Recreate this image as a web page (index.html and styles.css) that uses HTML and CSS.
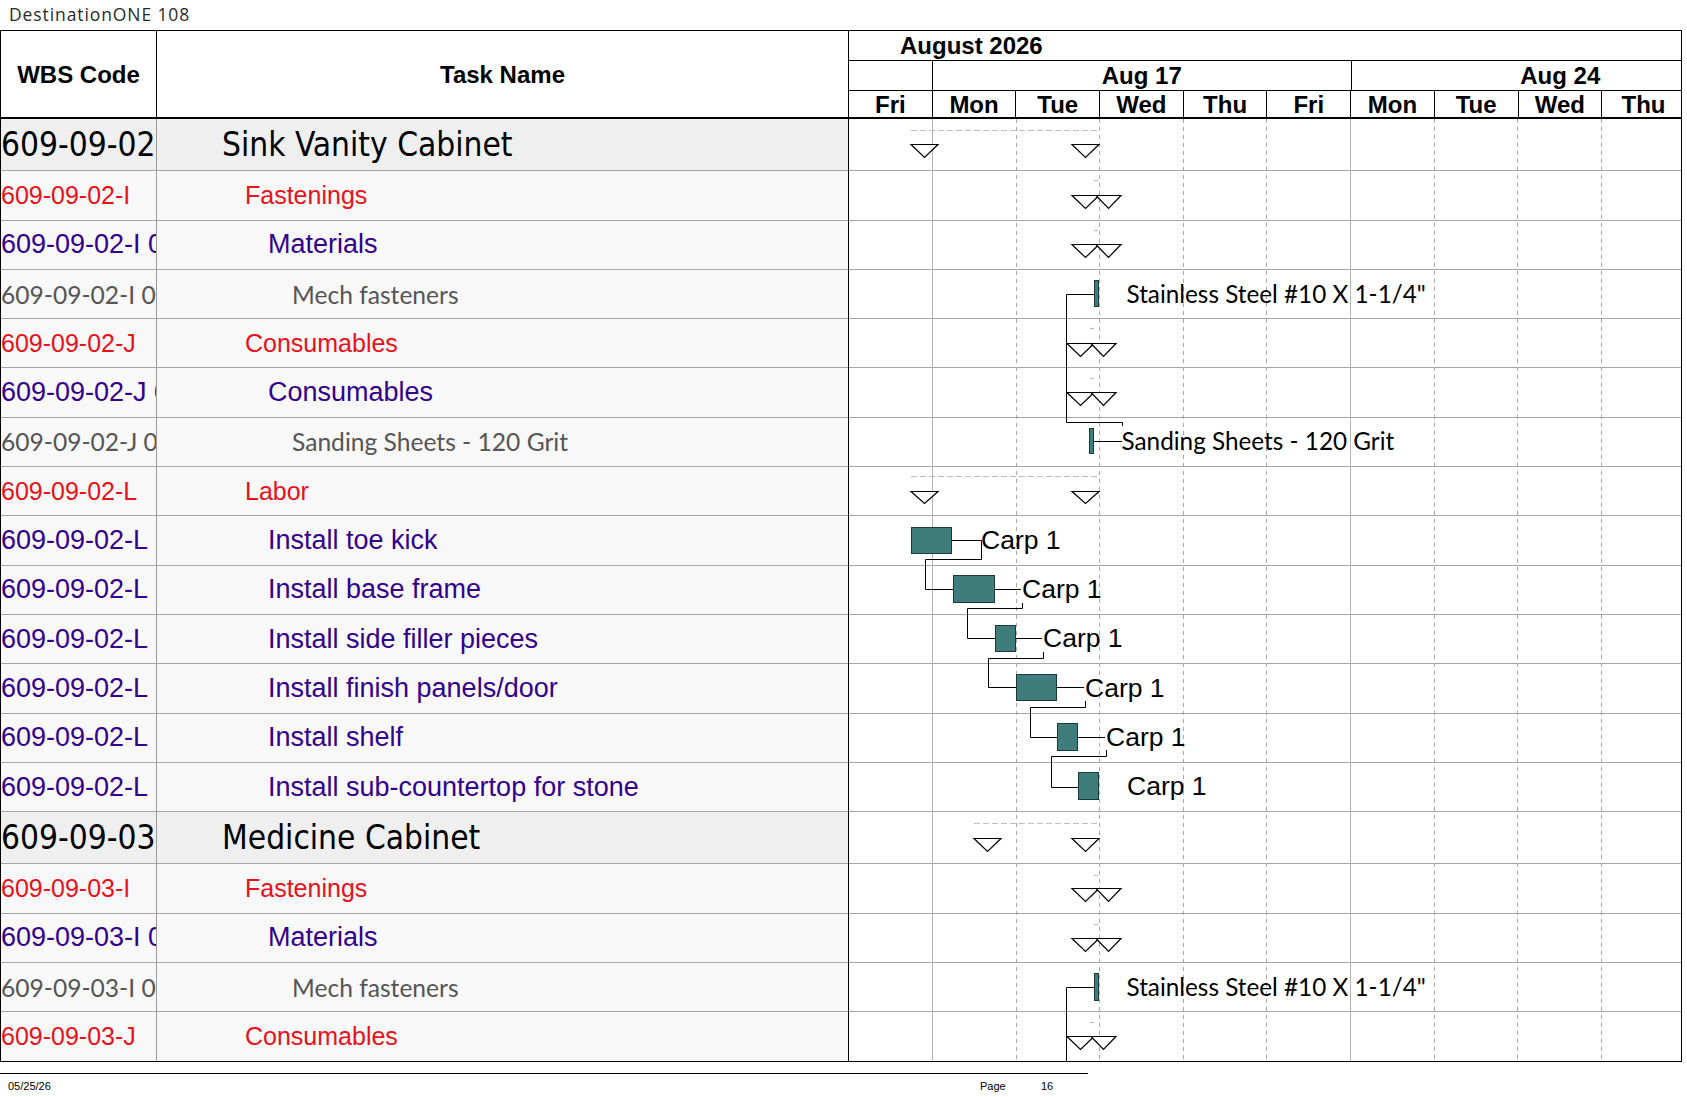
FILE: index.html
```html
<!DOCTYPE html>
<html>
<head>
<meta charset="utf-8">
<link rel="stylesheet" href="styles.css">
</head>
<body>
<div class="title">DestinationONE 108</div>
<div class="chart">
  <div class="table">
    <div class="thead">
      <div class="th wbs">WBS Code</div>
      <div class="th task">Task Name</div>
    </div>
    <div class="row sum"><div class="code">609-09-02</div><div class="name l1">Sink Vanity Cabinet</div></div>
    <div class="row red"><div class="code">609-09-02-I</div><div class="name l2">Fastenings</div></div>
    <div class="row pur"><div class="code">609-09-02-I 01</div><div class="name l3">Materials</div></div>
    <div class="row gray"><div class="code">609-09-02-I 01 01</div><div class="name l4">Mech fasteners</div></div>
    <div class="row red"><div class="code">609-09-02-J</div><div class="name l2">Consumables</div></div>
    <div class="row pur"><div class="code">609-09-02-J 01</div><div class="name l3">Consumables</div></div>
    <div class="row gray"><div class="code">609-09-02-J 01 01</div><div class="name l4">Sanding Sheets - 120 Grit</div></div>
    <div class="row red"><div class="code">609-09-02-L</div><div class="name l2">Labor</div></div>
    <div class="row pur"><div class="code">609-09-02-L</div><div class="name l3">Install toe kick</div></div>
    <div class="row pur"><div class="code">609-09-02-L</div><div class="name l3">Install base frame</div></div>
    <div class="row pur"><div class="code">609-09-02-L</div><div class="name l3">Install side filler pieces</div></div>
    <div class="row pur"><div class="code">609-09-02-L</div><div class="name l3">Install finish panels/door</div></div>
    <div class="row pur"><div class="code">609-09-02-L</div><div class="name l3">Install shelf</div></div>
    <div class="row pur"><div class="code">609-09-02-L</div><div class="name l3">Install sub-countertop for stone</div></div>
    <div class="row sum"><div class="code">609-09-03</div><div class="name l1">Medicine Cabinet</div></div>
    <div class="row red"><div class="code">609-09-03-I</div><div class="name l2">Fastenings</div></div>
    <div class="row pur"><div class="code">609-09-03-I 01</div><div class="name l3">Materials</div></div>
    <div class="row gray"><div class="code">609-09-03-I 01 01</div><div class="name l4">Mech fasteners</div></div>
    <div class="row red"><div class="code">609-09-03-J</div><div class="name l2">Consumables</div></div>
  </div>
  <div class="gantt">
    <div class="ghead">
      <div class="month">August 2026</div>
      <div class="weeks">
        <div class="wk wk0"></div>
        <div class="wk wkf">Aug 17</div>
        <div class="wk wkf">Aug 24</div>
      </div>
      <div class="days">
        <div class="day">Fri</div><div class="day">Mon</div><div class="day">Tue</div><div class="day">Wed</div><div class="day">Thu</div>
        <div class="day">Fri</div><div class="day">Mon</div><div class="day">Tue</div><div class="day">Wed</div><div class="day">Thu</div>
      </div>
    </div>
    <div class="gbody">
      <div class="grow sum"></div>
      <div class="grow"></div><div class="grow"></div><div class="grow"></div><div class="grow"></div>
      <div class="grow"></div><div class="grow"></div><div class="grow"></div><div class="grow"></div>
      <div class="grow"></div><div class="grow"></div><div class="grow"></div><div class="grow"></div>
      <div class="grow"></div>
      <div class="grow sum"></div>
      <div class="grow"></div><div class="grow"></div><div class="grow"></div><div class="grow"></div>
      <svg class="overlay" width="832" height="943" viewBox="849 119 832 943" xmlns="http://www.w3.org/2000/svg">
        <g class="vsolid">
          <line x1="932.5" y1="119" x2="932.5" y2="1062"/>
          <line x1="1350.5" y1="119" x2="1350.5" y2="1062"/>
        </g>
        <g class="vdash">
          <line x1="1016.5" y1="119" x2="1016.5" y2="1062"/>
          <line x1="1099.5" y1="119" x2="1099.5" y2="1062"/>
          <line x1="1183.5" y1="119" x2="1183.5" y2="1062"/>
          <line x1="1266.5" y1="119" x2="1266.5" y2="1062"/>
          <line x1="1434.5" y1="119" x2="1434.5" y2="1062"/>
          <line x1="1517.5" y1="119" x2="1517.5" y2="1062"/>
          <line x1="1601.5" y1="119" x2="1601.5" y2="1062"/>
        </g>
        <g class="sumline">
          <line x1="911" y1="130.5" x2="1100" y2="130.5"/>
          <line x1="911" y1="476.5" x2="1100" y2="476.5"/>
          <line x1="974" y1="823.5" x2="1100" y2="823.5"/>
          <line x1="1094" y1="180.5" x2="1098" y2="180.5"/>
          <line x1="1094" y1="230.5" x2="1098" y2="230.5"/>
          <line x1="1090" y1="328.5" x2="1094" y2="328.5"/>
          <line x1="1090" y1="378.5" x2="1094" y2="378.5"/>
          <line x1="1094" y1="875.5" x2="1098" y2="875.5"/>
          <line x1="1094" y1="924.5" x2="1098" y2="924.5"/>
          <line x1="1090" y1="1022.5" x2="1094" y2="1022.5"/>
        </g>
        <g class="tri">
          <polygon points="911,144.5 938,144.5 924.5,157.5"/>
          <polygon points="1072,144.5 1099,144.5 1085.5,157.5"/>
          <polygon points="1072,195.5 1099,195.5 1085.5,208.5"/>
          <polygon points="1096,195.5 1121,195.5 1108.5,208.5"/>
          <polygon points="1072,244.5 1099,244.5 1085.5,257.5"/>
          <polygon points="1096,244.5 1121,244.5 1108.5,257.5"/>
          <polygon points="1067,343.5 1094,343.5 1080.5,356.5"/>
          <polygon points="1091,343.5 1116,343.5 1103.5,356.5"/>
          <polygon points="1067,392.5 1094,392.5 1080.5,405.5"/>
          <polygon points="1091,392.5 1116,392.5 1103.5,405.5"/>
          <polygon points="911,491.5 938,491.5 924.5,503.5"/>
          <polygon points="1072,491.5 1099,491.5 1085.5,503.5"/>
          <polygon points="974,838.5 1001,838.5 987.5,851.5"/>
          <polygon points="1072,838.5 1099,838.5 1085.5,851.5"/>
          <polygon points="1072,888.5 1099,888.5 1085.5,901.5"/>
          <polygon points="1096,888.5 1121,888.5 1108.5,901.5"/>
          <polygon points="1072,938.5 1099,938.5 1085.5,951.5"/>
          <polygon points="1096,938.5 1121,938.5 1108.5,951.5"/>
          <polygon points="1067,1036.5 1094,1036.5 1080.5,1049.5"/>
          <polygon points="1091,1036.5 1116,1036.5 1103.5,1049.5"/>
        </g>
        <g class="link">
          <polyline points="1094,294.5 1066.5,294.5 1066.5,422.5 1122.5,422.5 1122.5,426"/>
          <polyline points="1093,441.5 1122,441.5"/>
          <polyline points="1094,987.5 1066.5,987.5 1066.5,1062"/>
          <polyline points="952,540.5 981.5,540.5 981.5,559.5 925.5,559.5 925.5,589.5 953,589.5"/>
          <polyline points="995,589.5 1021,589.5"/>
          <polyline points="1022.5,603 1022.5,608.5 967.5,608.5 967.5,638.5 995,638.5"/>
          <polyline points="1016,638.5 1042,638.5"/>
          <polyline points="1043.5,652 1043.5,658.5 988.5,658.5 988.5,687.5 1017,687.5"/>
          <polyline points="1057,687.5 1084,687.5"/>
          <polyline points="1085.5,701 1085.5,707.5 1030.5,707.5 1030.5,737.5 1057,737.5"/>
          <polyline points="1078,737.5 1105,737.5"/>
          <polyline points="1106.5,750 1106.5,756.5 1051.5,756.5 1051.5,787.5 1078,787.5"/>
        </g>
        <g class="bar">
          <rect x="1094.5" y="280.5" width="4" height="26"/>
          <rect x="1089.5" y="428.5" width="4" height="25"/>
          <rect x="1094.5" y="973.5" width="4" height="27"/>
          <rect x="911.5" y="527.5" width="40" height="26"/>
          <rect x="953.5" y="575.5" width="41" height="27"/>
          <rect x="995.5" y="625.5" width="20" height="26"/>
          <rect x="1016.5" y="674.5" width="40" height="26"/>
          <rect x="1057.5" y="723.5" width="20" height="27"/>
          <rect x="1078.5" y="772.5" width="20" height="27"/>
        </g>
        <g class="carp">
          <text x="981" y="549">Carp 1</text>
          <text x="1022" y="597.5">Carp 1</text>
          <text x="1043" y="646.5">Carp 1</text>
          <text x="1085" y="696.5">Carp 1</text>
          <text x="1106" y="745.5">Carp 1</text>
          <text x="1127" y="794.5">Carp 1</text>
        </g>
        <g class="res">
          <text x="1126.5" y="302.5">Stainless Steel #10 X 1-1/4"</text>
          <text x="1121.5" y="450">Sanding Sheets - 120 Grit</text>
          <text x="1126.5" y="995.5">Stainless Steel #10 X 1-1/4"</text>
        </g>
      </svg>
    </div>
  </div>
</div>
<div class="footer">
  <div class="fdate">05/25/26</div>
  <div class="fpage">Page</div>
  <div class="fnum">16</div>
</div>
</body>
</html>
```

FILE: styles.css
```css
* { box-sizing: border-box; }

body {
  margin: 0;
  background: #ffffff;
  width: 1687px;
  color: #000;
}

.title {
  height: 30px;
  padding: 6px 0 0 9px;
  font-family: "Open Sans", "DejaVu Sans", sans-serif;
  font-size: 17.5px;
  line-height: 17px;
  letter-spacing: 0.9px;
  color: #2a2a2a;
  white-space: nowrap;
}

.chart {
  display: flex;
  width: 1682px;
  border-top: 1px solid #000;
  border-bottom: 1px solid #000;
}

/* ---------- left table ---------- */
.table {
  width: 849px;
  flex: none;
  border-left: 1px solid #000;
  border-right: 1px solid #000;
}

.thead {
  display: flex;
  height: 88px;
  border-bottom: 2px solid #000;
}

.th {
  display: flex;
  align-items: center;
  justify-content: center;
  font-family: "Liberation Sans", Arial, sans-serif;
  font-weight: bold;
  font-size: 24px;
  padding-top: 2px;
}

.th.wbs {
  width: 156px;
  flex: none;
  border-right: 1px solid #000;
}

.th.task { flex: 1; }

.row {
  display: flex;
  height: 49.3px;
  background: #f8f8f8;
  border-bottom: 1px solid #a6a6a6;
  font-family: "Liberation Sans", Arial, sans-serif;
  font-size: 25px;
}

.row:last-child {
  border-bottom: 0;
  height: 48.3px;
}

.row.sum {
  height: 52.3px;
  background: #efefef;
  font-family: "DejaVu Sans Condensed", "DejaVu Sans", sans-serif;
  font-stretch: condensed;
  font-size: 33.2px;
  color: #000;
}

.row.red { color: #e8101a; }
.row.pur { color: #33008c; font-size: 27px; }
.row.gray {
  color: #555555;
  font-family: Lato, "Open Sans", sans-serif;
  font-size: 24.6px;
}

.code {
  width: 156px;
  flex: none;
  border-right: 1px solid #9a9a9a;
  display: flex;
  align-items: center;
  white-space: nowrap;
  overflow: hidden;
}

.name {
  flex: 1;
  display: flex;
  align-items: center;
  white-space: nowrap;
  overflow: hidden;
}

.name.l1 { padding-left: 65px; }
.name.l2 { padding-left: 88px; }
.name.l3 { padding-left: 111px; }
.name.l4 { padding-left: 135px; }

/* ---------- gantt ---------- */
.gantt {
  width: 833px;
  flex: none;
  border-right: 1px solid #000;
  overflow: hidden;
  background: #fff;
}

.ghead {
  height: 88px;
  border-bottom: 2px solid #000;
  font-family: "Liberation Sans", Arial, sans-serif;
  font-weight: bold;
  font-size: 24px;
}

.month {
  height: 30px;
  line-height: 29px;
  padding-left: 51px;
  border-bottom: 1px solid #000;
  white-space: nowrap;
}

.weeks {
  display: flex;
  height: 30px;
  border-bottom: 1px solid #000;
}

.wk {
  flex: none;
  height: 29px;
  line-height: 30px;
  text-align: center;
  border-right: 1px solid #000;
  white-space: nowrap;
}

.wk0 { width: 84px; }
.wkf { width: 418.5px; }

.days {
  display: flex;
  height: 26px;
}

.day {
  flex: none;
  width: 83.7px;
  line-height: 27px;
  text-align: center;
  border-right: 1px solid #000;
}

.gbody {
  position: relative;
  overflow: hidden;
}

.grow {
  height: 49.3px;
  border-bottom: 1px solid #a6a6a6;
}

.grow.sum { height: 52.3px; }

.grow:nth-last-child(2) {
  border-bottom: 0;
  height: 48.3px;
}

.overlay {
  position: absolute;
  top: 0;
  left: 0;
  display: block;
}

.vsolid line { stroke: #b4b4b4; stroke-width: 1; }
.vdash line { stroke: #a8a8a8; stroke-width: 1; stroke-dasharray: 4 4; }
.sumline line { stroke: #bdbdbd; stroke-width: 1.2; stroke-dasharray: 6 3; }

.tri polygon {
  fill: #ffffff;
  stroke: #000;
  stroke-width: 1.2;
  stroke-linejoin: miter;
}

.link polyline {
  fill: none;
  stroke: #000;
  stroke-width: 1;
}

.bar rect {
  fill: #3f7d7d;
  stroke: #1c3a3a;
  stroke-width: 1;
}

.carp text {
  font-family: "Liberation Sans", Arial, sans-serif;
  font-size: 26.5px;
  fill: #000;
}

.res text {
  font-family: Lato, "Open Sans", sans-serif;
  font-size: 24.3px;
  fill: #000;
}

/* ---------- footer ---------- */
.footer {
  display: flex;
  width: 1088px;
  margin-top: 11px;
  border-top: 1px solid #000;
  padding-top: 6px;
  font-family: "Liberation Sans", Arial, sans-serif;
  font-size: 11px;
  line-height: 13px;
  color: #000;
}

.fdate { width: 980px; padding-left: 8px; }
.fpage { width: 61px; }
```
